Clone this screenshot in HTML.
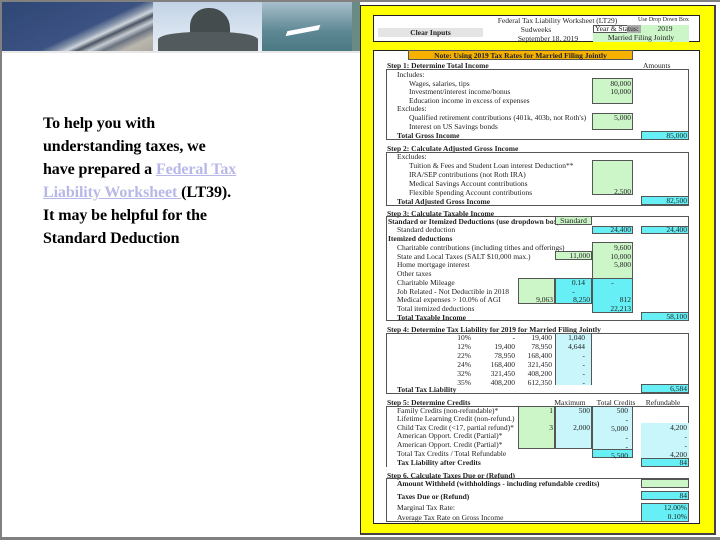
<!DOCTYPE html>
<html><head><meta charset="utf-8"><style>
*{margin:0;padding:0;box-sizing:border-box}
body{width:720px;height:540px;overflow:hidden;background:#fff;position:relative;font-family:"Liberation Serif",serif}
.a{position:absolute}
.t{position:absolute;font-size:7.5px;line-height:9px;white-space:nowrap;color:#222;font-family:"Liberation Serif",serif}
.b{font-weight:bold}
.r{text-align:right}
.c{text-align:center}
.g{position:absolute;background:#ccf5c8;border:1px solid #555}
.y{position:absolute;background:#66f0f5;border:1px solid #555}
.l{position:absolute;background:#c8f6fb}
.bx{position:absolute;border:1px solid #555;border-top:none}
</style></head><body>
<!-- frame -->
<div class="a" style="left:0;top:0;width:720px;height:2px;background:#808080"></div>
<div class="a" style="left:0;top:0;width:2px;height:540px;background:#808080"></div>
<div class="a" style="left:0;top:537px;width:720px;height:3px;background:#808080"></div>
<!-- banner -->
<div class="a" style="left:2px;top:2px;width:151px;height:49px;background:linear-gradient(155deg,#2f4775 0%,#3b5282 55%,#8a97ab 62%,#cfd6de 66%,#4a5463 70%,#c7ccd2 75%,#6a7280 80%,#b9b7ae 88%,#a9a79e 100%)"></div>
<div class="a" style="left:153px;top:2px;width:109px;height:49px;background:linear-gradient(180deg,#c2d3e6,#e6eef5)"></div>
<div class="a" style="left:190px;top:8px;width:40px;height:40px;background:#454c4e;border-radius:45% 50% 30% 30%"></div>
<div class="a" style="left:158px;top:32px;width:100px;height:19px;background:#525a5d;border-radius:40% 40% 0 0"></div>
<div class="a" style="left:262px;top:2px;width:90px;height:49px;background:linear-gradient(180deg,#a9bfcc,#5d8894 60%,#4b7883)"></div>
<div class="a" style="left:288px;top:28px;width:30px;height:5px;background:#fff;transform:skewX(-30deg) rotate(-12deg)"></div>
<div class="a" style="left:352px;top:2px;width:8px;height:49px;background:#6a8a86"></div>
<div class="a" style="left:2px;top:51px;width:358px;height:2px;background:#e8e8e8"></div>
<!-- left text -->
<div class="a" style="left:43px;top:112px;width:300px;font-size:16px;line-height:23px;color:#000;font-weight:bold;white-space:nowrap;letter-spacing:-0.1px">To help you with<br>understanding taxes, we<br>have prepared a <span style="color:#b8b8e8;text-decoration:underline">Federal Tax</span><br><span style="color:#b8b8e8;text-decoration:underline">Liability Worksheet </span>(LT39).<br>It may be helpful for the<br>Standard Deduction</div>
<!-- yellow panel -->
<div class="a" style="left:360px;top:5px;width:356px;height:530px;background:#ffff00;border:1px solid #222;border-right:2px solid #444;border-bottom:2px solid #444"></div>
<div class="a" style="left:373px;top:15px;width:327px;height:27px;background:#fff;border:1px solid #222"></div>
<div class="a" style="left:373px;top:50px;width:327px;height:474px;background:#fff;border:1px solid #222"></div>
<!-- header -->
<div class="a" style="left:378px;top:28px;width:105px;height:9px;background:#e4e4e4"></div>
<div class="t b c" style="left:378px;top:28px;width:105px">Clear Inputs</div>
<div class="t c" style="left:490px;top:16px;width:135px">Federal Tax Liability Worksheet (LT29)</div>
<div class="t" style="left:638px;top:16px;font-size:6px">Use Drop Down Box</div>
<div class="t c" style="left:500px;top:25px;width:72px">Sudweeks</div>
<div class="t c" style="left:500px;top:34px;width:96px">September 18, 2019</div>
<div class="a" style="left:593px;top:25px;width:48px;height:8px;background:#fff;border:1px solid #555"></div>
<div class="a" style="left:627px;top:25px;width:14px;height:8px;background:#aaa"></div>
<div class="t" style="left:595px;top:24px">Year &amp; Status:</div>
<div class="a" style="left:641px;top:25px;width:48px;height:17px;background:#ccf5c8"></div>
<div class="a" style="left:593px;top:33px;width:48px;height:9px;background:#ccf5c8"></div>
<div class="t c" style="left:641px;top:24px;width:48px">2019</div>
<div class="t c" style="left:593px;top:33px;width:96px">Married Filing Jointly</div>
<!-- note -->
<div class="a" style="left:408px;top:50px;width:225px;height:10px;background:#f5b000;border:1px solid #555"></div>
<div class="t b c" style="left:408px;top:51px;width:225px">Note: Using 2019 Tax Rates for Married Filing Jointly</div>
<!-- step1 -->
<div class="t b" style="left:387px;top:61px">Step 1: Determine Total Income</div>
<div class="t" style="left:643px;top:61px">Amounts</div>
<div class="bx" style="left:386px;top:69px;width:303px;height:71px;border-top:1px solid #555"></div>
<div class="t" style="left:397px;top:70px">Includes:</div>
<div class="t" style="left:409px;top:79px">Wages, salaries, tips</div>
<div class="t" style="left:409px;top:87px">Investment/interest income/bonus</div>
<div class="t" style="left:409px;top:96px">Education income in excess of expenses</div>
<div class="t" style="left:397px;top:104px">Excludes:</div>
<div class="t" style="left:409px;top:113px">Qualified retirement contributions (401k, 403b, not Roth's)</div>
<div class="t" style="left:409px;top:122px">Interest on US Savings bonds</div>
<div class="t b" style="left:397px;top:131px">Total Gross Income</div>
<div class="g" style="left:592px;top:78px;width:41px;height:26px"></div>
<div class="t r" style="left:592px;top:79px;width:39px">80,000</div>
<div class="t r" style="left:592px;top:87px;width:39px">10,000</div>
<div class="g" style="left:592px;top:113px;width:41px;height:17px"></div>
<div class="t r" style="left:592px;top:113px;width:39px">5,000</div>
<div class="y" style="left:641px;top:131px;width:48px;height:9px"></div>
<div class="t r" style="left:641px;top:131px;width:46px">85,000</div>
<!-- step2 -->
<div class="t b" style="left:387px;top:144px">Step 2: Calculate Adjusted Gross Income</div>
<div class="bx" style="left:386px;top:152px;width:303px;height:54px;border-top:1px solid #555"></div>
<div class="t" style="left:397px;top:152px">Excludes:</div>
<div class="t" style="left:409px;top:161px">Tuition &amp; Fees and Student Loan interest Deduction**</div>
<div class="t" style="left:409px;top:170px">IRA/SEP contributions (not Roth IRA)</div>
<div class="t" style="left:409px;top:179px">Medical Savings Account contributions</div>
<div class="t" style="left:409px;top:188px">Flexible Spending Account contributions</div>
<div class="t b" style="left:397px;top:197px">Total Adjusted Gross Income</div>
<div class="g" style="left:592px;top:160px;width:41px;height:35px"></div>
<div class="t r" style="left:592px;top:187px;width:39px">2,500</div>
<div class="y" style="left:641px;top:196px;width:48px;height:9px"></div>
<div class="t r" style="left:641px;top:196px;width:46px">82,500</div>
<!-- step3 -->
<div class="t b" style="left:387px;top:209px">Step 3: Calculate Taxable Income</div>
<div class="a" style="left:386px;top:216px;width:303px;height:105px;border:1px solid #555"></div>
<div class="t b" style="left:388px;top:217px">Standard or Itemized Deductions (use dropdown box)</div>
<div class="g" style="left:555px;top:216px;width:37px;height:9px"></div>
<div class="t c" style="left:555px;top:216px;width:37px">Standard</div>
<div class="t" style="left:397px;top:225px">Standard deduction</div>
<div class="y" style="left:592px;top:226px;width:41px;height:8px"></div>
<div class="t r" style="left:592px;top:225px;width:39px">24,400</div>
<div class="y" style="left:641px;top:226px;width:48px;height:8px"></div>
<div class="t r" style="left:641px;top:225px;width:46px">24,400</div>
<div class="t b" style="left:388px;top:234px">Itemized deductions</div>
<div class="t" style="left:397px;top:243px">Charitable contributions (including tithes and offerings)</div>
<div class="t" style="left:397px;top:252px">State and Local Taxes (SALT $10,000 max.)</div>
<div class="t" style="left:397px;top:260px">Home mortgage interest</div>
<div class="t" style="left:397px;top:269px">Other taxes</div>
<div class="t" style="left:397px;top:278px">Charitable Mileage</div>
<div class="t" style="left:397px;top:287px">Job Related - Not Deductible in 2018</div>
<div class="t" style="left:397px;top:295px">Medical expenses &gt; 10.0% of AGI</div>
<div class="t" style="left:397px;top:304px">Total itemized deductions</div>
<div class="t b" style="left:397px;top:313px">Total Taxable Income</div>
<div class="g" style="left:592px;top:242px;width:41px;height:37px"></div>
<div class="y" style="left:592px;top:278px;width:41px;height:35px"></div>
<div class="t r" style="left:592px;top:243px;width:39px">9,600</div>
<div class="t r" style="left:592px;top:252px;width:39px">10,000</div>
<div class="t r" style="left:592px;top:260px;width:39px">5,800</div>
<div class="t c" style="left:592px;top:278px;width:41px">-</div>
<div class="t r" style="left:592px;top:295px;width:39px">812</div>
<div class="t r" style="left:592px;top:304px;width:39px">22,213</div>
<div class="g" style="left:555px;top:251px;width:37px;height:9px"></div>
<div class="t r" style="left:555px;top:251px;width:35px">11,000</div>
<div class="g" style="left:518px;top:278px;width:37px;height:26px"></div>
<div class="t r" style="left:518px;top:295px;width:35px">9,063</div>
<div class="y" style="left:555px;top:278px;width:37px;height:26px"></div>
<div class="t r" style="left:555px;top:278px;width:30px">0.14</div>
<div class="t c" style="left:555px;top:287px;width:37px">-</div>
<div class="t r" style="left:555px;top:295px;width:35px">8,250</div>
<div class="y" style="left:641px;top:312px;width:48px;height:9px"></div>
<div class="t r" style="left:641px;top:312px;width:46px">58,100</div>
<!-- step4 -->
<div class="t b" style="left:387px;top:325px">Step 4: Determine Tax Liability for 2019 for Married Filing Jointly</div>
<div class="a" style="left:386px;top:333px;width:303px;height:61px;border:1px solid #555"></div>
<div class="l" style="left:555px;top:334px;width:37px;height:51px;border-right:1px solid #555;border-left:1px solid #555"></div>
<div class="t r" style="left:440px;top:333px;width:31px">10%<br>12%<br>22%<br>24%<br>32%<br>35%</div>
<div class="t r" style="left:480px;top:333px;width:35px">-<br>19,400<br>78,950<br>168,400<br>321,450<br>408,200</div>
<div class="t r" style="left:515px;top:333px;width:37px">19,400<br>78,950<br>168,400<br>321,450<br>408,200<br>612,350</div>
<div class="t r" style="left:555px;top:333px;width:30px">1,040<br>4,644<br>-<br>-<br>-<br>-</div>
<div class="t b" style="left:397px;top:385px">Total Tax Liability</div>
<div class="y" style="left:641px;top:384px;width:48px;height:9px"></div>
<div class="t r" style="left:641px;top:384px;width:46px">6,584</div>
<!-- step5 -->
<div class="t b" style="left:387px;top:398px">Step 5: Determine Credits</div>
<div class="t c" style="left:550px;top:398px;width:40px">Maximum</div>
<div class="t c" style="left:594px;top:398px;width:44px">Total Credits</div>
<div class="t c" style="left:640px;top:398px;width:46px">Refundable</div>
<div class="a" style="left:386px;top:406px;width:303px;height:61px;border:1px solid #555;border-bottom:none"></div>
<div class="g" style="left:518px;top:406px;width:37px;height:43px"></div>
<div class="l" style="left:555px;top:406px;width:37px;height:43px;border:1px solid #555"></div>
<div class="l" style="left:592px;top:406px;width:41px;height:44px;border:1px solid #555"></div>
<div class="y" style="left:592px;top:449px;width:41px;height:9px"></div>
<div class="l" style="left:641px;top:423px;width:48px;height:35px"></div>
<div class="t" style="left:397px;top:406px">Family Credits (non-refundable)*</div>
<div class="t" style="left:397px;top:414px">Lifetime Learning Credit (non-refund.)</div>
<div class="t" style="left:397px;top:423px">Child Tax Credit (&lt;17, partial refund)*</div>
<div class="t" style="left:397px;top:431px">American Opport. Credit (Partial)*</div>
<div class="t" style="left:397px;top:440px">American Opport. Credit (Partial)*</div>
<div class="t" style="left:397px;top:449px">Total Tax Credits / Total Refundable</div>
<div class="t b" style="left:397px;top:458px">Tax Liability after Credits</div>
<div class="t r" style="left:518px;top:406px;width:35px">1</div>
<div class="t r" style="left:518px;top:423px;width:35px">3</div>
<div class="t r" style="left:555px;top:406px;width:35px">500</div>
<div class="t r" style="left:555px;top:423px;width:35px">2,000</div>
<div class="t r" style="left:592px;top:406px;width:36px">500<br>-<br>5,000<br>-<br>-<br>5,500</div>
<div class="t r" style="left:641px;top:423px;width:46px">4,200<br>-<br>-<br>4,200</div>
<div class="y" style="left:641px;top:458px;width:48px;height:9px"></div>
<div class="t r" style="left:641px;top:458px;width:46px">84</div>
<!-- step6 -->
<div class="t b" style="left:387px;top:471px">Step 6. Calculate Taxes Due or (Refund)</div>
<div class="a" style="left:386px;top:478px;width:303px;height:44px;border:1px solid #555;border-right:none"></div>
<div class="t b" style="left:397px;top:479px">Amount Withheld (withholdings - including refundable credits)</div>
<div class="g" style="left:641px;top:479px;width:48px;height:9px"></div>
<div class="t b" style="left:397px;top:492px">Taxes Due or (Refund)</div>
<div class="y" style="left:641px;top:491px;width:48px;height:9px"></div>
<div class="t r" style="left:641px;top:491px;width:46px">84</div>
<div class="t" style="left:397px;top:503px">Marginal Tax Rate:</div>
<div class="t" style="left:397px;top:513px">Average Tax Rate on Gross Income</div>
<div class="y" style="left:641px;top:503px;width:48px;height:19px"></div>
<div class="t r" style="left:641px;top:503px;width:46px">12.00%</div>
<div class="t r" style="left:641px;top:512px;width:46px">0.10%</div>
</body></html>
